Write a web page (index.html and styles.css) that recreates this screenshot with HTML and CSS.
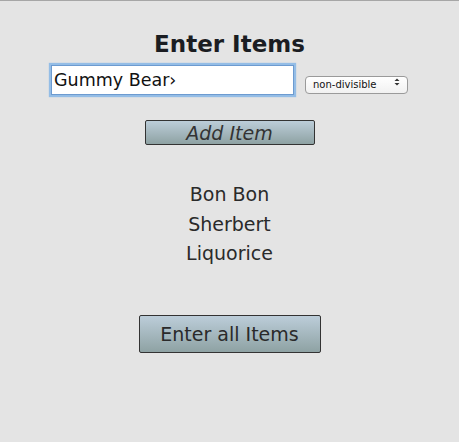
FILE: index.html
```html
<!DOCTYPE html>
<html lang="en">
<head>
<meta charset="utf-8">
<title>Enter Items</title>
<link rel="stylesheet" href="styles.css">
</head>
<body>
<main class="page">
  <h1 class="title">Enter Items</h1>
  <div class="entry-row">
    <input class="item-input" type="text" value="Gummy Bear›">
    <div class="select-wrap">
      <select class="kind-select">
        <option>non-divisible</option>
        <option>divisible</option>
      </select>
      <svg class="select-arrows" width="6" height="8" viewBox="0 0 6 8" aria-hidden="true">
        <path d="M0.5 3 L3 0.5 L5.5 3 Z M0.5 5 L3 7.5 L5.5 5 Z" fill="#333"/>
      </svg>
    </div>
  </div>
  <button class="btn btn-add" type="button">Add Item</button>
  <ul class="item-list">
    <li>Bon Bon</li>
    <li>Sherbert</li>
    <li>Liquorice</li>
  </ul>
  <button class="btn btn-enter" type="button">Enter all Items</button>
</main>
</body>
</html>
```

FILE: styles.css
```css
html, body {
  margin: 0;
  padding: 0;
  height: 100%;
}

body {
  background: #e4e4e4;
  border-top: 1px solid #a6a6a6;
  box-sizing: border-box;
  font-family: "DejaVu Sans", Verdana, sans-serif;
  color: #222;
}

.page {
  display: flex;
  flex-direction: column;
  align-items: center;
  padding-top: 30px;
}

.title {
  margin: 0;
  font-size: 23px;
  line-height: 26px;
  font-weight: bold;
  color: #1b1d22;
}

.entry-row {
  display: flex;
  align-items: flex-start;
  gap: 11px;
  margin-top: 8px;
}

.item-input {
  box-sizing: border-box;
  width: 243px;
  height: 30px;
  margin: 0;
  padding: 0 0 0 2px;
  border: 1px solid #6d9bd0;
  box-shadow: 0 0 1px 2px #94bde6;
  outline: none;
  background: #fff;
  font-family: "DejaVu Sans", Verdana, sans-serif;
  font-size: 17.5px;
  color: #111;
}

.select-wrap {
  position: relative;
  margin-top: 8px;
}

.kind-select {
  appearance: none;
  -webkit-appearance: none;
  box-sizing: border-box;
  width: 103px;
  height: 18px;
  margin: 0;
  padding: 0 0 0 7px;
  border: 1px solid #9a9a9a;
  border-radius: 4px;
  background: linear-gradient(#ffffff, #f1f1f1);
  font-family: "DejaVu Sans", Verdana, sans-serif;
  font-size: 10px;
  line-height: 16px;
  color: #111;
}

.select-arrows {
  position: absolute;
  right: 8px;
  top: 5px;
  pointer-events: none;
}

.btn {
  box-sizing: border-box;
  margin: 0;
  padding: 0;
  border: 1px solid #333;
  border-radius: 2px;
  background: linear-gradient(#bccdd9, #8ea2a3);
  font-family: "DejaVu Sans", Verdana, sans-serif;
  font-size: 19px;
  color: #2a2a2a;
}

.btn-add {
  width: 170px;
  height: 25px;
  margin-top: 25px;
  font-style: italic;
  line-height: 22px;
  color: #333;
}

.item-list {
  list-style: none;
  margin: 35px 0 0;
  padding: 0;
  text-align: center;
  font-size: 19px;
  line-height: 29.5px;
  color: #2a2a2a;
}

.btn-enter {
  width: 182px;
  height: 38px;
  margin-top: 46px;
  line-height: 36px;
}
```
